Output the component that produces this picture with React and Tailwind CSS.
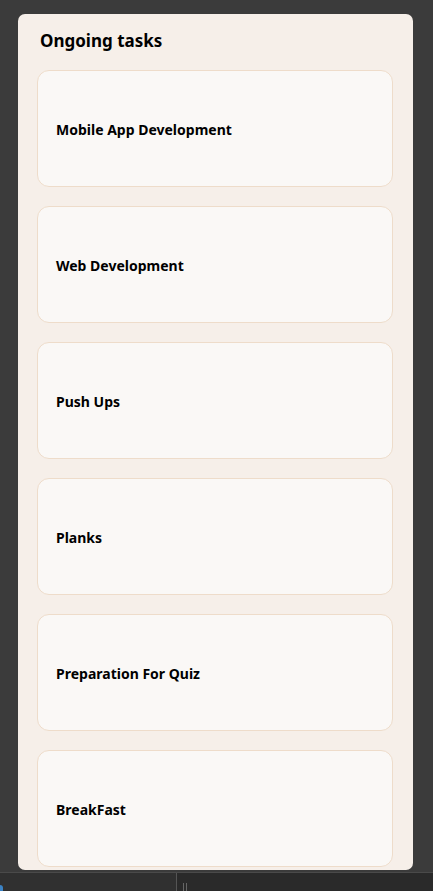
export default function App() {
  const tasks = [
    "Mobile App Development",
    "Web Development",
    "Push Ups",
    "Planks",
    "Preparation For Quiz",
    "BreakFast",
  ];
  return (
    <div className="w-[433px] h-[891px] bg-[#3b3b3b] flex flex-col overflow-hidden" style={{ fontFamily: '"Noto Sans", "Open Sans", sans-serif' }}>
      <div className="pt-[14px] pl-[18px] pr-[20px] shrink-0">
        <div className="h-[856px] bg-[#f6efe9] rounded-[7px] pl-[19px] pr-[20px] pt-[17px] overflow-hidden">
          <h2 className="text-[17px] leading-[20px] font-bold text-black ml-[3px]">Ongoing tasks</h2>
          <div className="mt-[19px] flex flex-col gap-[19px]">
            {tasks.map((t) => (
              <div key={t} className="h-[117px] bg-[#faf8f6] border border-[#eedcca] rounded-[12px] flex items-center pl-[18px] pt-[2px]">
                <span className="text-[14px] font-bold text-black">{t}</span>
              </div>
            ))}
          </div>
        </div>
      </div>
      <div className="mt-[2px] flex-1 bg-[#2a2a2a] border-t border-[#4a4a4a] flex">
        <div className="w-[177px] bg-[#303030] border-r border-[#555] relative">
          <div className="absolute left-0 top-[12px] w-[3px] h-[8px] bg-[#3b82c4] rounded-r" />
        </div>
        <div className="ml-[6px] mt-[10px] flex gap-[2px]">
          <div className="w-px h-[10px] bg-[#666]" />
          <div className="w-px h-[10px] bg-[#666]" />
        </div>
      </div>
    </div>
  );
}
